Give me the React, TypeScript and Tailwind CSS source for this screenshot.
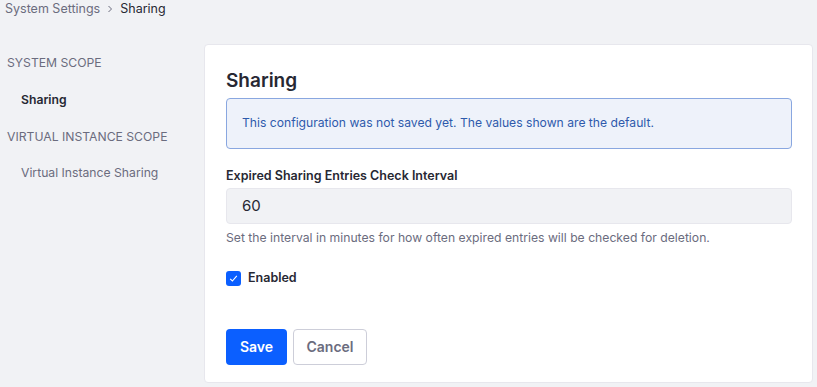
export default function App() {
  return (
    <div
      className="w-[817px] h-[387px] bg-[#f1f2f5] text-[#272833] overflow-hidden"
      style={{ fontFamily: 'Inter, "Noto Sans", sans-serif' }}
    >
      {/* Breadcrumb */}
      <div className="h-[18px] pl-[5px] flex items-center text-[12.5px] leading-none gap-[6px]">
        <span className="text-[#6b6c7e]">System Settings</span>
        <svg width="8" height="8" viewBox="0 0 8 8" className="text-[#6b6c7e]">
          <path d="M2.5 1 L5.5 4 L2.5 7" fill="none" stroke="currentColor" strokeWidth="1" />
        </svg>
        <span className="text-[#272833]">Sharing</span>
      </div>

      <div className="flex mt-[26px]">
        {/* Sidebar */}
        <nav className="w-[204px] shrink-0 pt-[11px] text-[12.2px]">
          <div className="pl-[7px] h-[16px] flex items-center text-[#6b6c7e] uppercase">System Scope</div>
          <div className="pl-[21px] h-[16px] mt-[21px] flex items-center font-semibold text-[#272833]">Sharing</div>
          <div className="pl-[7px] h-[16px] mt-[21px] flex items-center text-[#6b6c7e] uppercase">Virtual Instance Scope</div>
          <div className="pl-[21px] h-[16px] mt-[20px] flex items-center text-[#6b6c7e]">Virtual Instance Sharing</div>
        </nav>

        {/* Card */}
        <section className="w-[609px] h-[339px] bg-white border border-[#e7e7ed] rounded-[4px] pl-[21px] pr-[20px] pt-[23px]">
          <h1 className="text-[19px] leading-[26px] font-semibold">Sharing</h1>

          <div className="mt-[4px] h-[51px] rounded-[4px] border border-[#89a7e0] bg-[#eef2fa] pl-[15px] flex items-center text-[12.15px] text-[#2e5aac]">
            This configuration was not saved yet. The values shown are the default.
          </div>

          <label className="block mt-[19px] h-[16px] leading-[16px] text-[12.5px] font-semibold">
            Expired Sharing Entries Check Interval
          </label>
          <div className="mt-[4px] h-[36px] rounded-[4px] bg-[#f1f2f5] border border-[#e7e7ed] pl-[15px] flex items-center text-[15px]">
            60
          </div>
          <p className="mt-[6px] h-[16px] leading-[16px] text-[12.2px] text-[#6b6c7e]">
            Set the interval in minutes for how often expired entries will be checked for deletion.
          </p>

          <div className="mt-[23px] flex items-center gap-[7px]">
            <span className="w-[15px] h-[15px] rounded-[3px] bg-[#0b5fff] flex items-center justify-center">
              <svg width="9" height="9" viewBox="0 0 9 9">
                <path d="M1.2 4.8 L3.4 7 L7.8 1.8" fill="none" stroke="white" strokeWidth="1.1" />
              </svg>
            </span>
            <span className="text-[12.5px] font-semibold">Enabled</span>
          </div>

          <div className="mt-[41px] flex gap-[6px]">
            <button className="h-[36px] w-[61px] rounded-[4px] bg-[#0b5fff] text-white text-[14px] font-semibold">
              Save
            </button>
            <button className="h-[36px] w-[74px] rounded-[4px] border border-[#cdced9] bg-white text-[#6b6c7e] text-[14px] font-semibold">
              Cancel
            </button>
          </div>
        </section>
      </div>
    </div>
  );
}
